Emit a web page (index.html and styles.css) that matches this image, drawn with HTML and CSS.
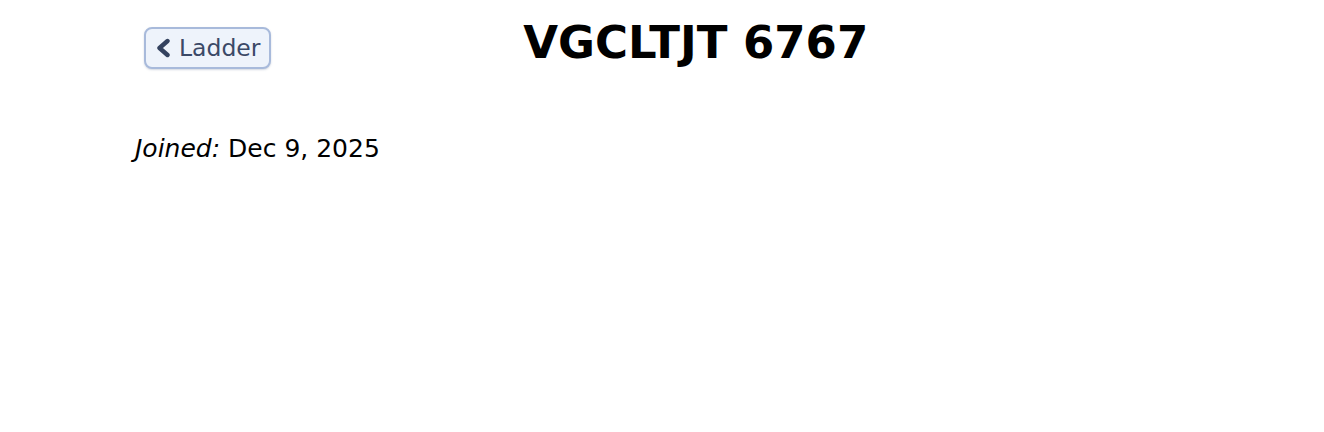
FILE: index.html
```html
<!DOCTYPE html>
<html lang="en">
<head>
    <meta charset="UTF-8">
    <meta name="viewport" content="width=device-width, initial-scale=1.0">
    <link rel="stylesheet" href="styles.css">
    <title>VGCLTJT 6767</title>
</head>
<body>

<div class="page">
    <div class="header">
        <button class="backButton">
            <svg class="chevron" width="14" height="20" viewBox="0 0 14 20">
                <path d="M11.5 3 L3.5 10 L11.5 17" fill="none" stroke="currentColor" stroke-width="4.4" stroke-linecap="round" stroke-linejoin="round"/>
            </svg>
            Ladder
        </button>
        <h1 class="playerName">VGCLTJT 6767</h1>
    </div>

    <p class="joined"><em>Joined:</em> Dec 9, 2025</p>
</div>

</body>
</html>
```

FILE: styles.css
```css
body {
    margin: 0;
    font-family: "DejaVu Sans", Verdana, sans-serif;
    background-color: #fff;
    color: #000;
}

.page {
    max-width: 1058px;
    margin: 0 auto;
    padding-top: 16px;
}

.header {
    display: flex;
    align-items: center;
}

.backButton {
    display: flex;
    align-items: center;
    gap: 9px;
    margin-left: 11px;
    margin-top: 11px;
    padding: 5px 9px 5px 10px;
    font-family: inherit;
    font-size: 23.5px;
    color: #3b4967;
    background-color: #eef3fb;
    border: 2px solid #a8badb;
    border-radius: 8px;
    box-shadow: 0 1px 2px rgba(80, 100, 140, 0.25);
    cursor: pointer;
}

.chevron {
    color: #34425f;
}

.playerName {
    flex: 1;
    margin: 0;
    padding-right: 71px;
    text-align: center;
    font-size: 45px;
    font-weight: bold;
}

.joined {
    margin: 65px 0 0 2px;
    font-size: 25px;
}
```
